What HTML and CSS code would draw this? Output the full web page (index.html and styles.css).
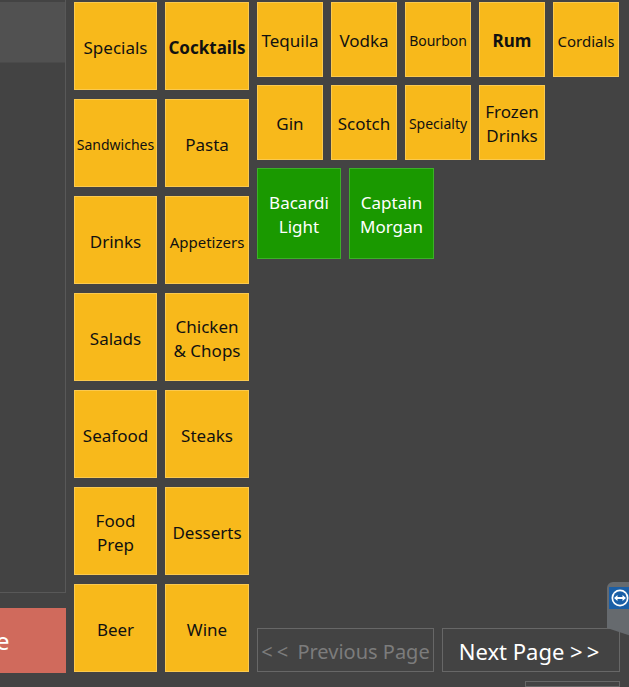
FILE: index.html
```html
<!DOCTYPE html>
<html>
<head>
<meta charset="utf-8">
<link rel="stylesheet" href="styles.css">
</head>
<body>
<div class="screen">
  <div class="side">
    <div class="side-panel">
      <div class="side-head"></div>
    </div>
    <div class="side-btn">e</div>
  </div>

  <div class="menu">
    <div class="tile">Specials</div>
    <div class="tile bold">Cocktails</div>
    <div class="tile sm">Sandwiches</div>
    <div class="tile">Pasta</div>
    <div class="tile">Drinks</div>
    <div class="tile md">Appetizers</div>
    <div class="tile">Salads</div>
    <div class="tile">Chicken<br>&amp; Chops</div>
    <div class="tile">Seafood</div>
    <div class="tile">Steaks</div>
    <div class="tile">Food<br>Prep</div>
    <div class="tile">Desserts</div>
    <div class="tile">Beer</div>
    <div class="tile">Wine</div>
  </div>

  <div class="main">
    <div class="items">
      <div class="item">Tequila</div>
      <div class="item">Vodka</div>
      <div class="item sm">Bourbon</div>
      <div class="item bold">Rum</div>
      <div class="item md">Cordials</div>
      <div class="item">Gin</div>
      <div class="item">Scotch</div>
      <div class="item sm">Specialty</div>
      <div class="item">Frozen<br>Drinks</div>
    </div>
    <div class="products">
      <div class="product">Bacardi<br>Light</div>
      <div class="product">Captain<br>Morgan</div>
    </div>
    <div class="pager">
      <div class="page-btn prev"><span><span class="arr">&lt;&lt;</span> Previous Page</span></div>
      <div class="page-btn next"><span>Next Page <span class="arr">&gt;&gt;</span></span></div>
    </div>
    <div class="foot-box"></div>
  </div>

  <div class="tv-tab">
    <svg width="22" height="22" viewBox="0 0 22 22">
      <rect x="0" y="0" width="22" height="22" fill="#1b5fa6"/>
      <circle cx="11" cy="11" r="8.5" fill="#ffffff"/>
      <circle cx="11" cy="11" r="6.8" fill="#1b5fa6"/>
      <path d="M5 11 L8.5 8 L8.5 10 L13.5 10 L13.5 8 L17 11 L13.5 14 L13.5 12 L8.5 12 L8.5 14 Z" fill="#ffffff"/>
    </svg>
  </div>
</div>
</body>
</html>
```

FILE: styles.css
```css
html, body {
  margin: 0;
  padding: 0;
  background: #434343;
  overflow: hidden;
}

.screen {
  position: relative;
  width: 629px;
  height: 687px;
  display: flex;
  font-family: "Noto Sans", "Open Sans", sans-serif;
  background: #434343;
}

.side {
  width: 66px;
  display: flex;
  flex-direction: column;
}

.side-panel {
  height: 593px;
  box-sizing: border-box;
  border-right: 1px solid #585858;
  border-bottom: 1px solid #585858;
  padding-top: 2px;
}

.side-head {
  height: 60px;
  background: #515151;
  border-bottom: 1px solid #4a4a4a;
}

.side-btn {
  margin-top: 15px;
  height: 65px;
  background: #d06a5c;
  color: #ffffff;
  font-size: 24px;
  line-height: 65px;
  text-indent: -4px;
  overflow: hidden;
}

.menu {
  margin-left: 8px;
  margin-top: 2px;
  display: grid;
  grid-template-columns: 83px 84px;
  grid-auto-rows: 88px;
  column-gap: 8px;
  row-gap: 9px;
  align-self: flex-start;
}

.tile, .item {
  box-sizing: border-box;
  background: #f8b91b;
  border: 1px solid #fbc94e;
  color: #111111;
  font-size: 17px;
  line-height: 24px;
  display: flex;
  align-items: center;
  justify-content: center;
  text-align: center;
}

.tile { padding-top: 3px; }
.item { padding-top: 2px; }

.sm { font-size: 14px; }
.md { font-size: 15px; }
.bold { font-weight: bold; }

.main {
  margin-left: 8px;
  margin-top: 2px;
  width: 364px;
  display: flex;
  flex-direction: column;
}

.items {
  display: grid;
  grid-template-columns: repeat(5, 66px);
  grid-auto-rows: 75px;
  gap: 8px;
}

.products {
  margin-top: 8px;
  display: grid;
  grid-template-columns: 84px 85px;
  grid-auto-rows: 91px;
  gap: 8px;
}

.product {
  box-sizing: border-box;
  background: #1a9900;
  border: 1px solid #3cb028;
  color: #ffffff;
  font-size: 17px;
  line-height: 24px;
  padding-top: 2px;
  display: flex;
  align-items: center;
  justify-content: center;
  text-align: center;
}

.pager {
  margin-top: 369px;
  display: flex;
  gap: 8px;
}

.page-btn {
  box-sizing: border-box;
  height: 44px;
  border: 1px solid #676767;
  display: flex;
  align-items: center;
  justify-content: center;
  white-space: nowrap;
  padding-top: 2px;
}

.arr { letter-spacing: 4px; }

.prev {
  width: 177px;
  color: #7c7c7c;
  font-size: 20px;
}

.next {
  width: 178px;
  color: #ffffff;
  font-size: 22px;
}

.foot-box {
  margin-top: 9px;
  margin-left: 268px;
  width: 95px;
  height: 20px;
  box-sizing: border-box;
  border: 1px solid #676767;
}

.tv-tab {
  position: absolute;
  left: 607px;
  top: 582px;
  width: 30px;
  height: 54px;
  background: #666a6e;
  border-radius: 6px 0 0 0;
  clip-path: polygon(0 0, 100% 0, 100% 100%, 80% 100%, 0 85%);
  padding: 5px 0 0 2px;
  box-sizing: border-box;
}
```
